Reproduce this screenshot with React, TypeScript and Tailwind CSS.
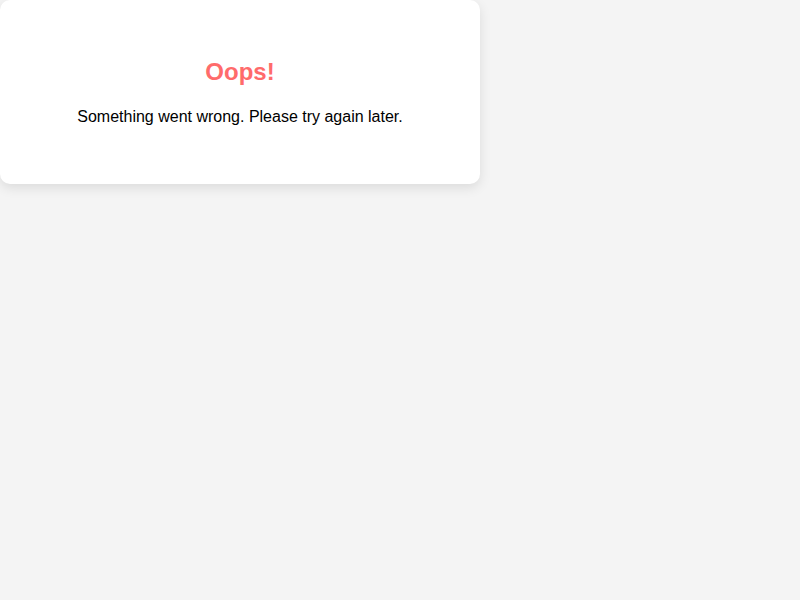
export default function App() {
    return (
        <div className="min-h-screen w-full bg-[#f4f4f4] font-['Liberation_Sans',Arial,sans-serif]">
            <div className="w-[480px] rounded-[10px] bg-white pt-[58px] pb-[58px] text-center shadow-[0_4px_12px_rgba(0,0,0,0.1)]">
                <h1 className="text-[24px] leading-[28px] font-bold text-[#ff6b6b]">Oops!</h1>
                <p className="mt-[22px] text-[16px] leading-[18px] text-black">
                    Something went wrong. Please try again later.
                </p>
            </div>
        </div>
    )
}
